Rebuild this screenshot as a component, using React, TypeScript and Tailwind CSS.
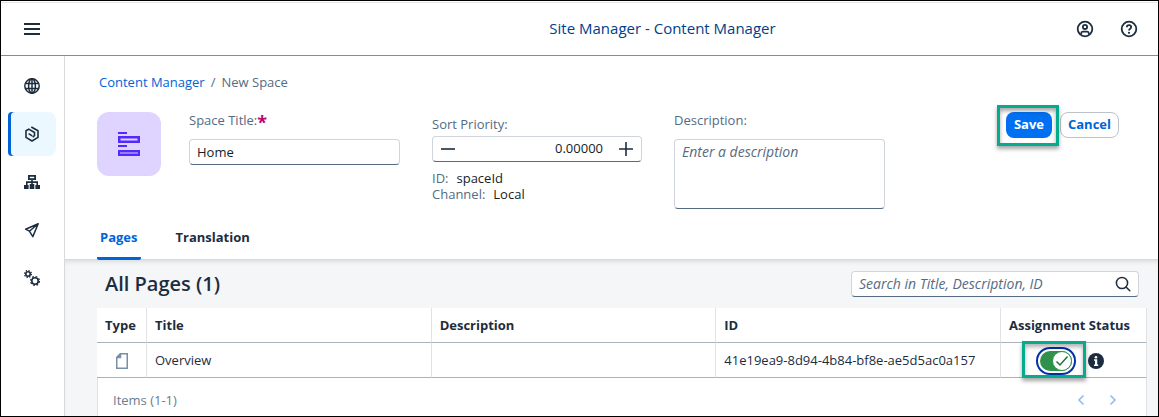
import { useState, type ReactNode } from "react";

const navItems: { label: string; icon: ReactNode }[] = [
  {
    label: "Site Directory",
    icon: (
      <svg viewBox="0 0 16 16" className="size-4" fill="none" stroke="currentColor" strokeWidth="1.5">
        <circle cx="8" cy="8" r="7.2" />
        <ellipse cx="8" cy="8" rx="3.4" ry="7.2" />
        <path d="M8 .8v14.4M1.2 5.5h13.6M1.2 10.5h13.6" />
      </svg>
    ),
  },
  {
    label: "Content Manager",
    icon: (
      <svg viewBox="0 0 16 16" className="size-4" fill="none" stroke="currentColor" strokeWidth="1.6" strokeLinejoin="round">
        <path d="M7.3 1 14 4.8v6.600L8 15l-6-3.600V4.800L4.800 3.100 10.500 6.500v3.200L8.600 11.200" />
        <path d="M4.600 7.600 8.200 9.900" />
      </svg>
    ),
  },
  {
    label: "Channel Manager",
    icon: (
      <svg viewBox="0 0 16 16" className="size-4" fill="currentColor">
        <path fillRule="evenodd" d="M4 1h8v5H4zM5.8 2.7v1.6h4.400V2.700z" />
        <path d="M7.200 6h1.600v4H7.200z" />
        <path d="M2 7.300h12V11h-1.600V8.900H3.600V11H2z" />
        <path d="M0 11h4.600v4H0zM5.700 10h4.600v5H5.700zM11.400 11H16v4h-4.600z" />
      </svg>
    ),
  },
  {
    label: "Transport Manager",
    icon: (
      <svg viewBox="0 0 16 16" className="size-4" fill="none" stroke="currentColor" strokeWidth="1.5" strokeLinejoin="round">
        <path d="M14.200 1.800 1.600 7.200l3.800 2 3.400 5.400zM14.200 1.800 5.400 9.200" />
      </svg>
    ),
  },
  {
    label: "Settings",
    icon: (
      <svg viewBox="0 0 16 16" className="size-4" fill="none" stroke="currentColor">
        <circle cx="4" cy="4" r="2.200" strokeWidth="1.600" />
        <circle cx="4" cy="4" r="3.400" strokeWidth="1.300" strokeDasharray="1.335 1.335" />
        <circle cx="11" cy="11" r="3.200" strokeWidth="1.600" />
        <circle cx="11" cy="11" r="4.400" strokeWidth="1.300" strokeDasharray="1.730 1.726" />
      </svg>
    ),
  },
];

function Header() {
  return (
    <header className="flex h-[55px] items-center justify-between border-t border-b border-t-white border-b-[#788fa6] pr-5 pl-[22px] shadow-[inset_0_1px_0_#e5e5e5]">
      <button type="button" aria-label="Toggle navigation" className="text-[#1d2d3e]">
        <svg viewBox="0 0 18 18" className="size-[18px]" fill="none" stroke="currentColor" strokeWidth="2">
          <path d="M1 4h16M1 9h16M1 14h16" />
        </svg>
      </button>
      <h1 className="pl-52 text-[15px] text-[#00418a]">Site Manager - Content Manager</h1>
      <div className="flex items-center gap-[26px] text-[#1d2d3e]">
        <button type="button" aria-label="User">
          <svg viewBox="0 0 18 18" className="size-[18px]" fill="none" stroke="currentColor" strokeWidth="1.800">
            <circle cx="9" cy="9" r="7.300" />
            <circle cx="9" cy="6.900" r="2.100" />
            <path d="M5.200 14.500v-1.200c0-1 .6-1.600 1.500-1.600h4.600c.9 0 1.500.6 1.500 1.600v1.200" />
          </svg>
        </button>
        <button type="button" aria-label="Help">
          <svg viewBox="0 0 18 18" className="size-[18px]" fill="none" stroke="currentColor" strokeWidth="1.800">
            <circle cx="9" cy="9" r="7.300" />
            <path d="M6.800 7.200C6.800 5.900 7.700 5.100 9 5.100s2.200.8 2.200 2c0 1.600-2.200 1.600-2.200 3.300" />
            <circle cx="9" cy="12.800" r="1.100" fill="currentColor" stroke="none" />
          </svg>
        </button>
      </div>
    </header>
  );
}

function Sidebar() {
  return (
    <nav aria-label="Main" className="flex w-16 shrink-0 flex-col gap-1 border-r border-[#d9d9d9] pt-2 pr-2 pl-[7px]">
      {navItems.map((item) => {
        const active = item.label === "Content Manager";
        return (
          <a
            key={item.label}
            href="#"
            aria-label={item.label}
            aria-current={active ? "page" : undefined}
            className={
              active
                ? "flex h-11 items-center justify-center rounded-lg rounded-l-sm bg-[#ebf8ff] text-[#1d2d3e] shadow-[inset_3px_0_0_#0064d9]"
                : "flex h-11 items-center justify-center rounded-lg text-[#1d2d3e]"
            }
          >
            {item.icon}
          </a>
        );
      })}
    </nav>
  );
}

const fieldBox = "rounded border border-[#d0d5dc] border-b-[#556b81] bg-white";

function SpaceForm() {
  return (
    <form className="flex items-start gap-8" onSubmit={(e) => e.preventDefault()}>
      <div className="flex min-w-0 flex-1 gap-7">
        <div className="flex size-16 shrink-0 items-center justify-center rounded-xl bg-[#dfd3ff] text-[#5429ff]">
          <svg viewBox="0 0 22 24" className="h-6 w-[22px]" fill="currentColor">
            <rect x="0" y="0" width="9" height="2" />
            <path fillRule="evenodd" d="M0 4h22v7H0zM2.500 6.500v2h17v-2z" />
            <rect x="0" y="13" width="9" height="2" />
            <path fillRule="evenodd" d="M0 18h22v6H0zM2 20.500v1h18v-1z" />
          </svg>
        </div>
        <div className="flex min-w-0 flex-1 gap-8">
          <div className="min-w-0 max-w-[211px] flex-1">
            <label htmlFor="title" className="flex h-[27px] leading-4 text-[#556b82]">
              Space Title:
              <span aria-hidden="true" className="text-lg leading-5 font-bold text-[#ba066c]">
                *
              </span>
            </label>
            <input id="title" required defaultValue="Home" className={`${fieldBox} h-[26px] w-full px-[7px] text-[#131e29]`} />
          </div>
          <div className="min-w-0 max-w-[210px] flex-1 pt-1">
            <label htmlFor="priority" className="block h-5 leading-4 text-[#556b82]">
              Sort Priority:
            </label>
            <div className={`${fieldBox} flex h-[26px] items-center px-2 text-[#1d2d3e]`}>
              <button type="button" aria-label="Decrease">
                <svg viewBox="0 0 14 14" className="size-[14px]" stroke="currentColor" strokeWidth="1.600">
                  <path d="M0 7h14" />
                </svg>
              </button>
              <input id="priority" defaultValue="0.00000" className="w-full min-w-0 px-4 text-right text-[#131e29]" />
              <button type="button" aria-label="Increase">
                <svg viewBox="0 0 14 14" className="size-[14px]" stroke="currentColor" strokeWidth="1.600">
                  <path d="M0 7h14M7 0v14" />
                </svg>
              </button>
            </div>
            <dl className="mt-2 leading-4">
              <div className="flex gap-2">
                <dt className="text-[#556b82]">ID:</dt>
                <dd className="text-[#131e29]">spaceId</dd>
              </div>
              <div className="flex gap-2">
                <dt className="text-[#556b82]">Channel:</dt>
                <dd className="text-[#131e29]">Local</dd>
              </div>
            </dl>
          </div>
          <div className="min-w-0 max-w-[211px] flex-1">
            <label htmlFor="description" className="block h-[27px] leading-4 text-[#556b82]">
              Description:
            </label>
            <textarea
              id="description"
              placeholder="Enter a description"
              className={`${fieldBox} block h-[70px] w-full resize-none px-[7px] py-1 text-sm leading-4 placeholder:text-[#556b82] placeholder:italic`}
            />
          </div>
        </div>
      </div>
      <div className="flex gap-2 font-bold">
        <div className="relative">
          <button type="submit" className="h-[26px] rounded-lg bg-[#0070f2] px-2 text-white">
            Save
          </button>
          <span className="pointer-events-none absolute -top-[7px] -right-[7px] -bottom-2 -left-[9px] border-3 border-[#04ab8c] shadow-[0_3px_4px_rgba(0,0,0,0.35),inset_0_3px_4px_rgba(0,0,0,0.35)]" />
        </div>
        <button type="button" className="h-[26px] rounded-lg border border-[#bcc3ca] px-[7px] text-[#0064d9]">
          Cancel
        </button>
      </div>
    </form>
  );
}

function StatusSwitch() {
  const [on, setOn] = useState(true);
  return (
    <label className="relative block h-7 w-10 rounded-full border-2 border-[#0032a5] p-[2px]">
      <input type="checkbox" role="switch" aria-label="Assigned" checked={on} onChange={() => setOn(!on)} className="sr-only" />
      <span className={on ? "flex h-5 justify-end rounded-full bg-[#30914c]" : "flex h-5 rounded-full bg-[#788fa6]"}>
        <span className="flex size-5 items-center justify-center rounded-full border border-[#30914c] bg-white text-[#256f3a]">
          {on && (
            <svg viewBox="0 0 14 12" className="h-3 w-[14px]" fill="none" stroke="currentColor" strokeWidth="1.500">
              <path d="M1.500 6.500 5 10l7.500-8.500" />
            </svg>
          )}
        </span>
      </span>
      <span className="pointer-events-none absolute -top-[8px] -right-[12px] -bottom-[5px] -left-[16px] border-3 border-[#04ab8c] shadow-[0_3px_4px_rgba(0,0,0,0.35),inset_0_3px_4px_rgba(0,0,0,0.3)]" />
    </label>
  );
}

const headCell = "border-r border-[#e0e2e5] px-2 pt-0.5 text-left font-bold whitespace-nowrap";
const bodyCell = "truncate border-r border-[#e0e2e5] px-2 pt-0.5";

function PagesSection() {
  return (
    <section className="flex flex-1 flex-col bg-[#f5f6f7] pr-[11px] pl-8 shadow-[inset_0_4px_4px_-2px_rgba(34,53,72,0.12)]">
      <div className="flex h-12 items-center justify-between px-2">
        <h2 className="text-xl font-semibold text-[#1d2d3e]">All Pages (1)</h2>
        <div className={`${fieldBox} flex h-[26px] w-72 items-center px-[7px]`}>
          <input
            type="search"
            aria-label="Search pages"
            placeholder="Search in Title, Description, ID"
            className="min-w-0 flex-1 text-sm placeholder:text-[#556b82] placeholder:italic"
          />
          <button type="button" aria-label="Search" className="text-[#1d2d3e]">
            <svg viewBox="0 0 16 16" className="size-4" fill="none" stroke="currentColor" strokeWidth="1.500" strokeLinecap="round">
              <circle cx="7" cy="7" r="5.600" />
              <path d="m11 11 3.800 3.800" />
            </svg>
          </button>
        </div>
      </div>
      <div className="flex flex-1 flex-col bg-white">
        <table className="w-full table-fixed border-separate border-spacing-0 text-[#1d2d3e]">
          <colgroup>
            <col className="w-[50px]" />
            <col />
            <col />
            <col />
            <col className="w-[146px]" />
          </colgroup>
          <thead>
            <tr className="h-[35px] [&>th]:border-b [&>th]:border-b-[#a8b3bd]">
              <th className={headCell}>Type</th>
              <th className={headCell}>Title</th>
              <th className={headCell}>Description</th>
              <th className={headCell}>ID</th>
              <th className={headCell}>Assignment Status</th>
            </tr>
          </thead>
          <tbody>
            <tr className="h-[35px] [&>td]:border-b [&>td]:border-b-[#a8b3bd]">
              <td className="border-r border-[#e0e2e5] pt-0.5">
                <svg viewBox="0 0 12 16" className="mx-auto h-4 w-3" fill="none" stroke="#788fa6" strokeWidth="1.500" role="img" aria-label="Page">
                  <path d="M4.500.75h6.750v14.500H.75V4.500z" />
                  <path d="M4.500.75V4.500H.75z" fill="#788fa6" />
                </svg>
              </td>
              <td className={bodyCell}>Overview</td>
              <td className={bodyCell} />
              <td className={bodyCell}>41e19ea9-8d94-4b84-bf8e-ae5d5ac0a157</td>
              <td className="border-r border-[#e0e2e5] pt-0.5">
                <div className="flex items-center justify-center gap-3 pr-2">
                  <StatusSwitch />
                  <svg viewBox="0 0 16 16" className="size-4" role="img" aria-label="Information">
                    <circle cx="8" cy="8" r="8" fill="#1d2d3e" />
                    <circle cx="8" cy="4.200" r="1.300" fill="#fff" />
                    <path d="M6 6.300h3.200v5.200h1V13H6v-1.500h1V7.800H6z" fill="#fff" />
                  </svg>
                </div>
              </td>
            </tr>
          </tbody>
        </table>
        <div className="flex min-h-[38px] flex-1 items-start justify-between border-x border-[#e0e2e5] px-[15px] pt-3 leading-5 text-[#6a7c8f]">
          <span>Items (1-1)</span>
          <div className="mr-3 flex h-5 items-center gap-5 text-[#8fbdf2]">
            <button type="button" aria-label="Previous page" disabled>
              <svg viewBox="0 0 12 12" className="size-3" fill="none" stroke="currentColor" strokeWidth="1.600">
                <path d="M8.500 1.500 4 6l4.500 4.500" />
              </svg>
            </button>
            <button type="button" aria-label="Next page" disabled>
              <svg viewBox="0 0 12 12" className="size-3" fill="none" stroke="currentColor" strokeWidth="1.600">
                <path d="M3.500 1.500 8 6l-4.500 4.500" />
              </svg>
            </button>
          </div>
        </div>
      </div>
    </section>
  );
}

export default function App() {
  return (
    <div className="flex min-h-screen flex-col border border-black bg-white font-['Open_Sans','Noto_Sans',sans-serif] text-[13px]">
      <Header />
      <div className="flex flex-1">
        <Sidebar />
        <main className="flex min-w-0 flex-1 flex-col">
          <div className="pr-[39px] pl-8">
            <nav aria-label="Breadcrumb" className="flex h-14 items-center gap-1.5 px-[2px] pb-0.5 text-[#556b82]">
              <a href="#" className="text-[#0064d9]">
                Content Manager
              </a>
              <span>/</span>
              <span aria-current="page">New Space</span>
            </nav>
            <SpaceForm />
          </div>
          <div role="tablist" className="mt-[7px] flex h-11 gap-8 border-b border-[#d9d9d9] pl-8 font-bold">
            <button type="button" role="tab" aria-selected="true" className="-mb-px rounded-b-xs border-b-3 border-[#0064d9] px-[3px] pt-0.5 text-[#0064d9]">
              Pages
            </button>
            <button type="button" role="tab" aria-selected="false" className="-mb-px border-b-3 border-transparent px-[3px] pt-0.5 text-[#1d2d3e]">
              Translation
            </button>
          </div>
          <PagesSection />
        </main>
      </div>
    </div>
  );
}
